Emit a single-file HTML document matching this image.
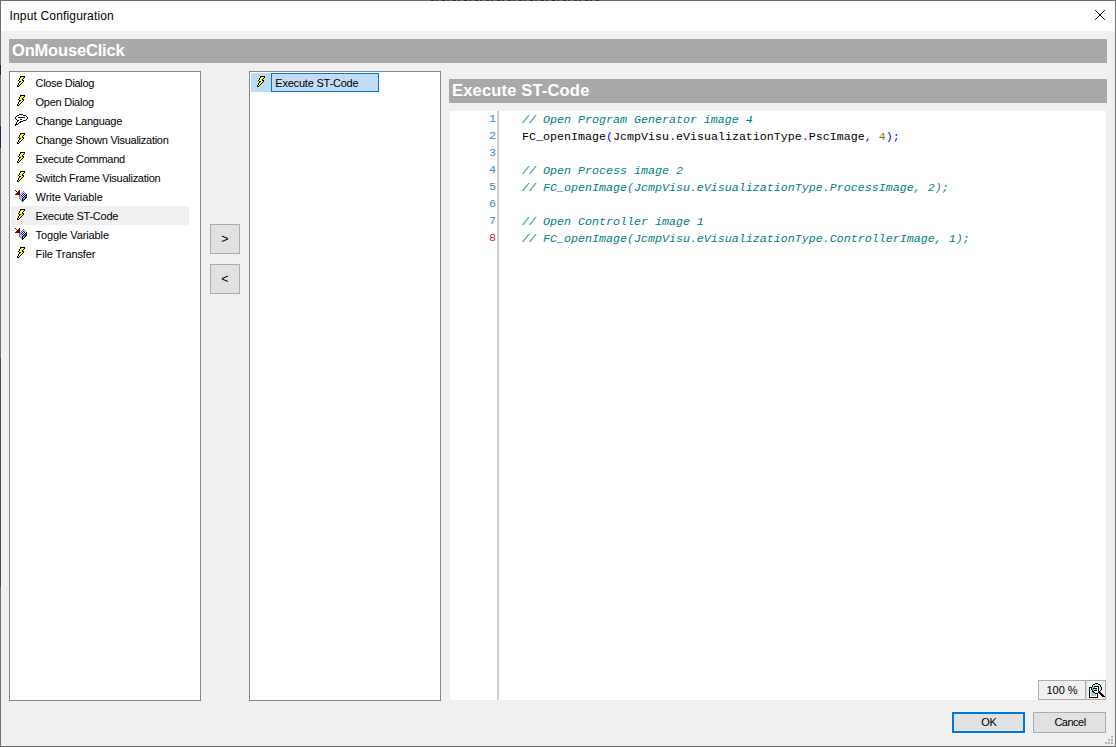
<!DOCTYPE html>
<html lang="en">
<head>
<meta charset="utf-8">
<title>Input Configuration</title>
<style>
html,body{margin:0;padding:0;}
body{width:1116px;height:747px;overflow:hidden;background:#f0f0f0;position:relative;
  font-family:"Liberation Sans",sans-serif;font-size:11px;color:#000;}
.abs{position:absolute;}
#win{position:absolute;left:0;top:0;width:1114px;height:745px;border:1px solid #6e6e6e;border-left-color:#707070;background:#f0f0f0;}
#titlebar{position:absolute;left:1px;top:1px;width:1114px;height:30px;background:#fff;}
#title{position:absolute;left:9.5px;top:8px;font-size:12px;line-height:16px;white-space:nowrap;letter-spacing:0.16px;}
.hdr{position:absolute;height:24px;background:#a9a9a9;color:#fff;font-weight:bold;font-size:16.5px;line-height:23px;white-space:nowrap;}
.hdr span{position:absolute;left:3px;top:0;display:inline-block;transform-origin:0 50%;}
.panel{position:absolute;background:#fff;border:1px solid #828790;box-sizing:border-box;}
.row{position:absolute;left:1px;width:178px;height:19px;line-height:19px;white-space:nowrap;}
.row .t{position:absolute;left:24.5px;top:1px;}
svg.ic{position:absolute;shape-rendering:crispEdges;}
.row svg{position:absolute;}
.btn{position:absolute;box-sizing:border-box;background:#e1e1e1;border:1px solid #adadad;text-align:center;white-space:nowrap;}
#code{position:absolute;left:450px;top:111px;width:656px;height:589px;background:#fff;}
#gutter{position:absolute;left:47px;top:0;width:2px;height:589px;background:#d0d0d0;}
.ln,.cl{position:absolute;font-family:"Liberation Mono",monospace;font-size:11.667px;line-height:17px;height:17px;white-space:pre;}
.ln{left:0;width:46px;text-align:right;color:#4a86b8;}
.cl{left:72px;color:#000;margin-top:1px;}
.c{color:#008080;font-style:italic;}
.p{color:#0000ff;}
.n{color:#8a7a00;}
</style>
</head>
<body>
<svg width="0" height="0" style="position:absolute"><defs>
<symbol id="bolt" viewBox="0 0 8 11"><rect x="3" y="0" width="5" height="1" fill="#000"/><rect x="3" y="1" width="1" height="1" fill="#000"/><rect x="4" y="1" width="3" height="1" fill="#ffff00"/><rect x="7" y="1" width="1" height="1" fill="#000"/><rect x="2" y="2" width="1" height="1" fill="#000"/><rect x="3" y="2" width="3" height="1" fill="#ffff00"/><rect x="6" y="2" width="1" height="1" fill="#000"/><rect x="2" y="3" width="1" height="1" fill="#000"/><rect x="3" y="3" width="2" height="1" fill="#ffff00"/><rect x="5" y="3" width="1" height="1" fill="#000"/><rect x="1" y="4" width="1" height="1" fill="#000"/><rect x="2" y="4" width="3" height="1" fill="#ffff00"/><rect x="5" y="4" width="2" height="1" fill="#000"/><rect x="2" y="5" width="2" height="1" fill="#000"/><rect x="4" y="5" width="2" height="1" fill="#ffff00"/><rect x="6" y="5" width="1" height="1" fill="#000"/><rect x="2" y="6" width="1" height="1" fill="#000"/><rect x="3" y="6" width="2" height="1" fill="#ffff00"/><rect x="5" y="6" width="1" height="1" fill="#000"/><rect x="1" y="7" width="1" height="1" fill="#000"/><rect x="2" y="7" width="2" height="1" fill="#ffff00"/><rect x="4" y="7" width="1" height="1" fill="#000"/><rect x="1" y="8" width="1" height="1" fill="#000"/><rect x="2" y="8" width="1" height="1" fill="#ffff00"/><rect x="3" y="8" width="1" height="1" fill="#000"/><rect x="0" y="9" width="1" height="1" fill="#000"/><rect x="1" y="9" width="1" height="1" fill="#ffff00"/><rect x="2" y="9" width="1" height="1" fill="#000"/><rect x="0" y="10" width="2" height="1" fill="#000"/></symbol>
<symbol id="bubble" viewBox="0 0 13 12"><rect x="4" y="0" width="4" height="1" fill="#000"/><rect x="2" y="1" width="2" height="1" fill="#000"/><rect x="8" y="1" width="3" height="1" fill="#000"/><rect x="1" y="2" width="1" height="1" fill="#000"/><rect x="11" y="2" width="1" height="1" fill="#000"/><rect x="0" y="3" width="1" height="1" fill="#000"/><rect x="3" y="3" width="7" height="1" fill="#000"/><rect x="12" y="3" width="1" height="1" fill="#000"/><rect x="0" y="4" width="1" height="1" fill="#000"/><rect x="12" y="4" width="1" height="1" fill="#000"/><rect x="1" y="5" width="1" height="1" fill="#000"/><rect x="5" y="5" width="2" height="1" fill="#000"/><rect x="11" y="5" width="1" height="1" fill="#000"/><rect x="2" y="6" width="2" height="1" fill="#000"/><rect x="8" y="6" width="3" height="1" fill="#000"/><rect x="2" y="7" width="1" height="1" fill="#000"/><rect x="5" y="7" width="3" height="1" fill="#000"/><rect x="1" y="8" width="1" height="1" fill="#000"/><rect x="4" y="8" width="2" height="1" fill="#000"/><rect x="1" y="9" width="1" height="1" fill="#000"/><rect x="3" y="9" width="1" height="1" fill="#000"/><rect x="0" y="10" width="3" height="1" fill="#000"/><rect x="0" y="11" width="1" height="1" fill="#000"/></symbol>
<symbol id="wv" viewBox="0 0 12 12"><rect x="0" y="0" width="1" height="1" fill="#800000"/><rect x="4" y="0" width="1" height="1" fill="#800000"/><rect x="1" y="1" width="1" height="1" fill="#800000"/><rect x="3" y="1" width="2" height="1" fill="#800000"/><rect x="8" y="1" width="1" height="1" fill="#808080"/><rect x="2" y="2" width="3" height="1" fill="#800000"/><rect x="7" y="2" width="1" height="1" fill="#808080"/><rect x="8" y="2" width="1" height="1" fill="#b4e4f8"/><rect x="9" y="2" width="1" height="1" fill="#808080"/><rect x="1" y="3" width="4" height="1" fill="#800000"/><rect x="6" y="3" width="1" height="1" fill="#808080"/><rect x="7" y="3" width="1" height="1" fill="#b4e4f8"/><rect x="8" y="3" width="1" height="1" fill="#0000ff"/><rect x="9" y="3" width="1" height="1" fill="#b4e4f8"/><rect x="10" y="3" width="1" height="1" fill="#808080"/><rect x="0" y="4" width="5" height="1" fill="#800000"/><rect x="5" y="4" width="1" height="1" fill="#808080"/><rect x="6" y="4" width="1" height="1" fill="#b4e4f8"/><rect x="7" y="4" width="1" height="1" fill="#0000ff"/><rect x="8" y="4" width="1" height="1" fill="#fff"/><rect x="9" y="4" width="1" height="1" fill="#0000ff"/><rect x="10" y="4" width="1" height="1" fill="#b4e4f8"/><rect x="11" y="4" width="1" height="1" fill="#000"/><rect x="4" y="5" width="1" height="1" fill="#808080"/><rect x="5" y="5" width="1" height="1" fill="#b4e4f8"/><rect x="6" y="5" width="1" height="1" fill="#0000ff"/><rect x="7" y="5" width="1" height="1" fill="#fff"/><rect x="8" y="5" width="1" height="1" fill="#0000ff"/><rect x="9" y="5" width="1" height="1" fill="#b4e4f8"/><rect x="10" y="5" width="2" height="1" fill="#000"/><rect x="4" y="6" width="2" height="1" fill="#808080"/><rect x="6" y="6" width="1" height="1" fill="#b4e4f8"/><rect x="7" y="6" width="1" height="1" fill="#0000ff"/><rect x="8" y="6" width="1" height="1" fill="#b4e4f8"/><rect x="9" y="6" width="1" height="1" fill="#000"/><rect x="10" y="6" width="1" height="1" fill="#808080"/><rect x="11" y="6" width="1" height="1" fill="#000"/><rect x="4" y="7" width="1" height="1" fill="#808080"/><rect x="5" y="7" width="1" height="1" fill="#a8d0f4"/><rect x="6" y="7" width="1" height="1" fill="#808080"/><rect x="7" y="7" width="1" height="1" fill="#b4e4f8"/><rect x="8" y="7" width="1" height="1" fill="#000"/><rect x="9" y="7" width="1" height="1" fill="#808080"/><rect x="10" y="7" width="2" height="1" fill="#000"/><rect x="4" y="8" width="1" height="1" fill="#808080"/><rect x="5" y="8" width="2" height="1" fill="#a8d0f4"/><rect x="7" y="8" width="1" height="1" fill="#000"/><rect x="8" y="8" width="2" height="1" fill="#808080"/><rect x="10" y="8" width="1" height="1" fill="#000"/><rect x="5" y="9" width="1" height="1" fill="#808080"/><rect x="6" y="9" width="1" height="1" fill="#a8d0f4"/><rect x="7" y="9" width="1" height="1" fill="#000"/><rect x="8" y="9" width="1" height="1" fill="#808080"/><rect x="9" y="9" width="1" height="1" fill="#000"/><rect x="6" y="10" width="1" height="1" fill="#808080"/><rect x="7" y="10" width="2" height="1" fill="#000"/><rect x="7" y="11" width="1" height="1" fill="#000"/></symbol>
<symbol id="mag" viewBox="0 0 16 15"><rect x="6" y="0" width="3" height="1" fill="#000"/><rect x="4" y="1" width="2" height="1" fill="#000"/><rect x="6" y="1" width="3" height="1" fill="#d4d4d4"/><rect x="9" y="1" width="2" height="1" fill="#000"/><rect x="3" y="2" width="1" height="1" fill="#000"/><rect x="4" y="2" width="7" height="1" fill="#d4d4d4"/><rect x="11" y="2" width="1" height="1" fill="#000"/><rect x="3" y="3" width="1" height="1" fill="#000"/><rect x="4" y="3" width="1" height="1" fill="#d4d4d4"/><rect x="5" y="3" width="5" height="1" fill="#000"/><rect x="10" y="3" width="1" height="1" fill="#d4d4d4"/><rect x="11" y="3" width="1" height="1" fill="#000"/><rect x="0" y="4" width="3" height="1" fill="#000"/><rect x="3" y="4" width="3" height="1" fill="#00e8e8"/><rect x="6" y="4" width="3" height="1" fill="#fff"/><rect x="9" y="4" width="1" height="1" fill="#000"/><rect x="10" y="4" width="2" height="1" fill="#d4d4d4"/><rect x="12" y="4" width="1" height="1" fill="#000"/><rect x="0" y="5" width="1" height="1" fill="#000"/><rect x="1" y="5" width="1" height="1" fill="#fff"/><rect x="2" y="5" width="1" height="1" fill="#000"/><rect x="3" y="5" width="1" height="1" fill="#00e8e8"/><rect x="4" y="5" width="4" height="1" fill="#000"/><rect x="8" y="5" width="1" height="1" fill="#fff"/><rect x="9" y="5" width="1" height="1" fill="#000"/><rect x="10" y="5" width="2" height="1" fill="#d4d4d4"/><rect x="12" y="5" width="1" height="1" fill="#000"/><rect x="0" y="6" width="1" height="1" fill="#000"/><rect x="1" y="6" width="1" height="1" fill="#fff"/><rect x="2" y="6" width="1" height="1" fill="#000"/><rect x="3" y="6" width="2" height="1" fill="#00e8e8"/><rect x="5" y="6" width="1" height="1" fill="#fff"/><rect x="6" y="6" width="2" height="1" fill="#00e8e8"/><rect x="8" y="6" width="1" height="1" fill="#fff"/><rect x="9" y="6" width="1" height="1" fill="#000"/><rect x="10" y="6" width="2" height="1" fill="#d4d4d4"/><rect x="12" y="6" width="1" height="1" fill="#000"/><rect x="0" y="7" width="1" height="1" fill="#000"/><rect x="1" y="7" width="2" height="1" fill="#fff"/><rect x="3" y="7" width="1" height="1" fill="#000"/><rect x="4" y="7" width="1" height="1" fill="#00e8e8"/><rect x="5" y="7" width="3" height="1" fill="#000"/><rect x="8" y="7" width="1" height="1" fill="#fff"/><rect x="9" y="7" width="1" height="1" fill="#000"/><rect x="10" y="7" width="1" height="1" fill="#d4d4d4"/><rect x="11" y="7" width="1" height="1" fill="#000"/><rect x="0" y="8" width="1" height="1" fill="#000"/><rect x="1" y="8" width="1" height="1" fill="#fff"/><rect x="2" y="8" width="1" height="1" fill="#c0c0c0"/><rect x="3" y="8" width="2" height="1" fill="#000"/><rect x="5" y="8" width="4" height="1" fill="#fff"/><rect x="9" y="8" width="2" height="1" fill="#000"/><rect x="0" y="9" width="1" height="1" fill="#000"/><rect x="1" y="9" width="1" height="1" fill="#fff"/><rect x="2" y="9" width="2" height="1" fill="#c0c0c0"/><rect x="4" y="9" width="2" height="1" fill="#000"/><rect x="6" y="9" width="3" height="1" fill="#d4d4d4"/><rect x="9" y="9" width="3" height="1" fill="#000"/><rect x="0" y="10" width="1" height="1" fill="#000"/><rect x="1" y="10" width="1" height="1" fill="#fff"/><rect x="2" y="10" width="4" height="1" fill="#c0c0c0"/><rect x="6" y="10" width="3" height="1" fill="#000"/><rect x="10" y="10" width="3" height="1" fill="#000"/><rect x="0" y="11" width="1" height="1" fill="#000"/><rect x="1" y="11" width="1" height="1" fill="#fff"/><rect x="2" y="11" width="5" height="1" fill="#c0c0c0"/><rect x="7" y="11" width="1" height="1" fill="#fff"/><rect x="8" y="11" width="1" height="1" fill="#000"/><rect x="11" y="11" width="3" height="1" fill="#000"/><rect x="0" y="12" width="1" height="1" fill="#000"/><rect x="1" y="12" width="1" height="1" fill="#fff"/><rect x="2" y="12" width="5" height="1" fill="#c0c0c0"/><rect x="7" y="12" width="1" height="1" fill="#fff"/><rect x="8" y="12" width="1" height="1" fill="#000"/><rect x="12" y="12" width="3" height="1" fill="#000"/><rect x="0" y="13" width="1" height="1" fill="#000"/><rect x="1" y="13" width="7" height="1" fill="#fff"/><rect x="8" y="13" width="1" height="1" fill="#000"/><rect x="13" y="13" width="3" height="1" fill="#000"/><rect x="0" y="14" width="9" height="1" fill="#000"/></symbol>
</defs></svg>
<div id="win"></div>
<div id="titlebar"></div>
<div id="title">Input Configuration</div>
<svg class="abs" style="left:1094px;top:9px" width="12" height="12" viewBox="0 0 12 12"><path d="M1.2 1.2 L10.8 10.8 M10.8 1.2 L1.2 10.8" stroke="#000" stroke-width="1" fill="none"/></svg>

<div class="hdr" style="left:9px;top:39px;width:1098px;"><span id="h1" style="letter-spacing:-0.18px">OnMouseClick</span></div>

<!-- left list -->
<div class="panel" id="left" style="left:9px;top:71px;width:192px;height:630px;">
  <div class="row" style="top:1px"><svg class="ic" style="left:6px;top:3px" width="8" height="11"><use href="#bolt"/></svg><span class="t" style="letter-spacing:-0.318px">Close Dialog</span></div>
  <div class="row" style="top:20px"><svg class="ic" style="left:6px;top:3px" width="8" height="11"><use href="#bolt"/></svg><span class="t" style="letter-spacing:-0.25px">Open Dialog</span></div>
  <div class="row" style="top:39px"><svg class="ic" style="left:4px;top:3px" width="13" height="12"><use href="#bubble"/></svg><span class="t" style="letter-spacing:-0.264px">Change Language</span></div>
  <div class="row" style="top:58px"><svg class="ic" style="left:6px;top:3px" width="8" height="11"><use href="#bolt"/></svg><span class="t" style="letter-spacing:-0.26px">Change Shown Visualization</span></div>
  <div class="row" style="top:77px"><svg class="ic" style="left:6px;top:3px" width="8" height="11"><use href="#bolt"/></svg><span class="t" style="letter-spacing:-0.279px">Execute Command</span></div>
  <div class="row" style="top:96px"><svg class="ic" style="left:6px;top:3px" width="8" height="11"><use href="#bolt"/></svg><span class="t" style="letter-spacing:-0.268px">Switch Frame Visualization</span></div>
  <div class="row" style="top:115px"><svg class="ic" style="left:4px;top:3px" width="12" height="12"><use href="#wv"/></svg><span class="t" style="letter-spacing:-0.054px">Write Variable</span></div>
  <div class="row" style="top:134px;background:#f0f0f0"><svg class="ic" style="left:6px;top:3px" width="8" height="11"><use href="#bolt"/></svg><span class="t" style="letter-spacing:-0.235px">Execute ST-Code</span></div>
  <div class="row" style="top:153px"><svg class="ic" style="left:4px;top:3px" width="12" height="12"><use href="#wv"/></svg><span class="t" style="letter-spacing:-0.107px">Toggle Variable</span></div>
  <div class="row" style="top:172px"><svg class="ic" style="left:6px;top:3px" width="8" height="11"><use href="#bolt"/></svg><span class="t" style="letter-spacing:-0.092px">File Transfer</span></div>
</div>

<div class="btn" style="left:210px;top:224px;width:30px;height:30px;line-height:29px;font-size:12.5px;">&gt;</div>
<div class="btn" style="left:210px;top:264px;width:30px;height:30px;line-height:29px;font-size:12.5px;">&lt;</div>

<!-- middle list -->
<div class="panel" id="mid" style="left:249px;top:71px;width:192px;height:630px;">
  <div class="abs" style="left:1px;top:1px;width:128px;height:19px;background:#bcdaf3;"></div>
  <svg class="ic" style="left:7px;top:4px" width="8" height="11"><use href="#bolt"/></svg>
  <div class="abs" style="left:21px;top:1px;width:108px;height:19px;box-sizing:border-box;border:1px solid #0078d7;background:#c1dcf4;line-height:17px;white-space:nowrap;"><span class="abs" style="left:3.3px;top:1px;letter-spacing:-0.21px">Execute ST-Code</span></div>
</div>

<div class="hdr" style="left:449px;top:79px;width:658px;"><span id="h2" style="letter-spacing:0.18px">Execute ST-Code</span></div>

<div id="code">
  <div id="gutter"></div>
  <div class="ln" style="top:0px">1</div><div class="cl c" style="top:0px">// Open Program Generator image 4</div>
  <div class="ln" style="top:17px">2</div><div class="cl" style="top:17px">FC_openImage<span class="p">(</span>JcmpVisu<span class="p">.</span>eVisualizationType<span class="p">.</span>PscImage<span class="p">,</span> <span class="n">4</span><span class="p">);</span></div>
  <div class="ln" style="top:34px">3</div>
  <div class="ln" style="top:51px">4</div><div class="cl c" style="top:51px">// Open Process image 2</div>
  <div class="ln" style="top:68px">5</div><div class="cl c" style="top:68px">// FC_openImage(JcmpVisu.eVisualizationType.ProcessImage, 2);</div>
  <div class="ln" style="top:85px">6</div>
  <div class="ln" style="top:102px">7</div><div class="cl c" style="top:102px">// Open Controller image 1</div>
  <div class="ln" style="top:119px;color:#c03030">8</div><div class="cl c" style="top:119px">// FC_openImage(JcmpVisu.eVisualizationType.ControllerImage, 1);</div>
</div>

<div class="btn" style="left:1038px;top:680px;width:48px;height:20px;background:#f0f0f0;line-height:18px;">100 %</div>
<div class="btn" style="left:1086px;top:680px;width:20px;height:20px;background:#f0f0f0;border-left-color:#d4d4d4;"></div>

<div class="btn" style="left:952px;top:712px;width:73px;height:21px;border:2px solid #0078d7;line-height:17px;letter-spacing:-0.3px;padding-left:1px;">OK</div>
<div class="btn" style="left:1033px;top:712px;width:73px;height:21px;line-height:19px;letter-spacing:-0.5px;padding-left:1px;">Cancel</div>
<svg class="abs" style="left:1105px;top:736px;shape-rendering:crispEdges" width="8" height="8"><g fill="#b4b4b4"><rect x="6" y="0" width="2" height="2"/><rect x="3" y="3" width="2" height="2"/><rect x="6" y="3" width="2" height="2"/><rect x="0" y="6" width="2" height="2"/><rect x="3" y="6" width="2" height="2"/><rect x="6" y="6" width="2" height="2"/></g></svg>
<svg class="ic" style="left:1089px;top:683px" width="16" height="15"><use href="#mag"/></svg>
<div class="abs" style="left:0;top:65px;width:1px;height:10px;background:#1c2c50"></div>
<div class="abs" style="left:0;top:126px;width:1px;height:22px;background:#1c2c50"></div>
<div class="abs" style="left:0;top:358px;width:1px;height:229px;background:#4a4a4a"></div>
<div class="abs" style="left:431px;top:0;width:168px;height:1px;background:repeating-linear-gradient(90deg,#2e2e2e 0 3px,#6e6e6e 3px 5px,#3a3a3a 5px 7px,#6e6e6e 7px 11px)"></div>
</body>
</html>
